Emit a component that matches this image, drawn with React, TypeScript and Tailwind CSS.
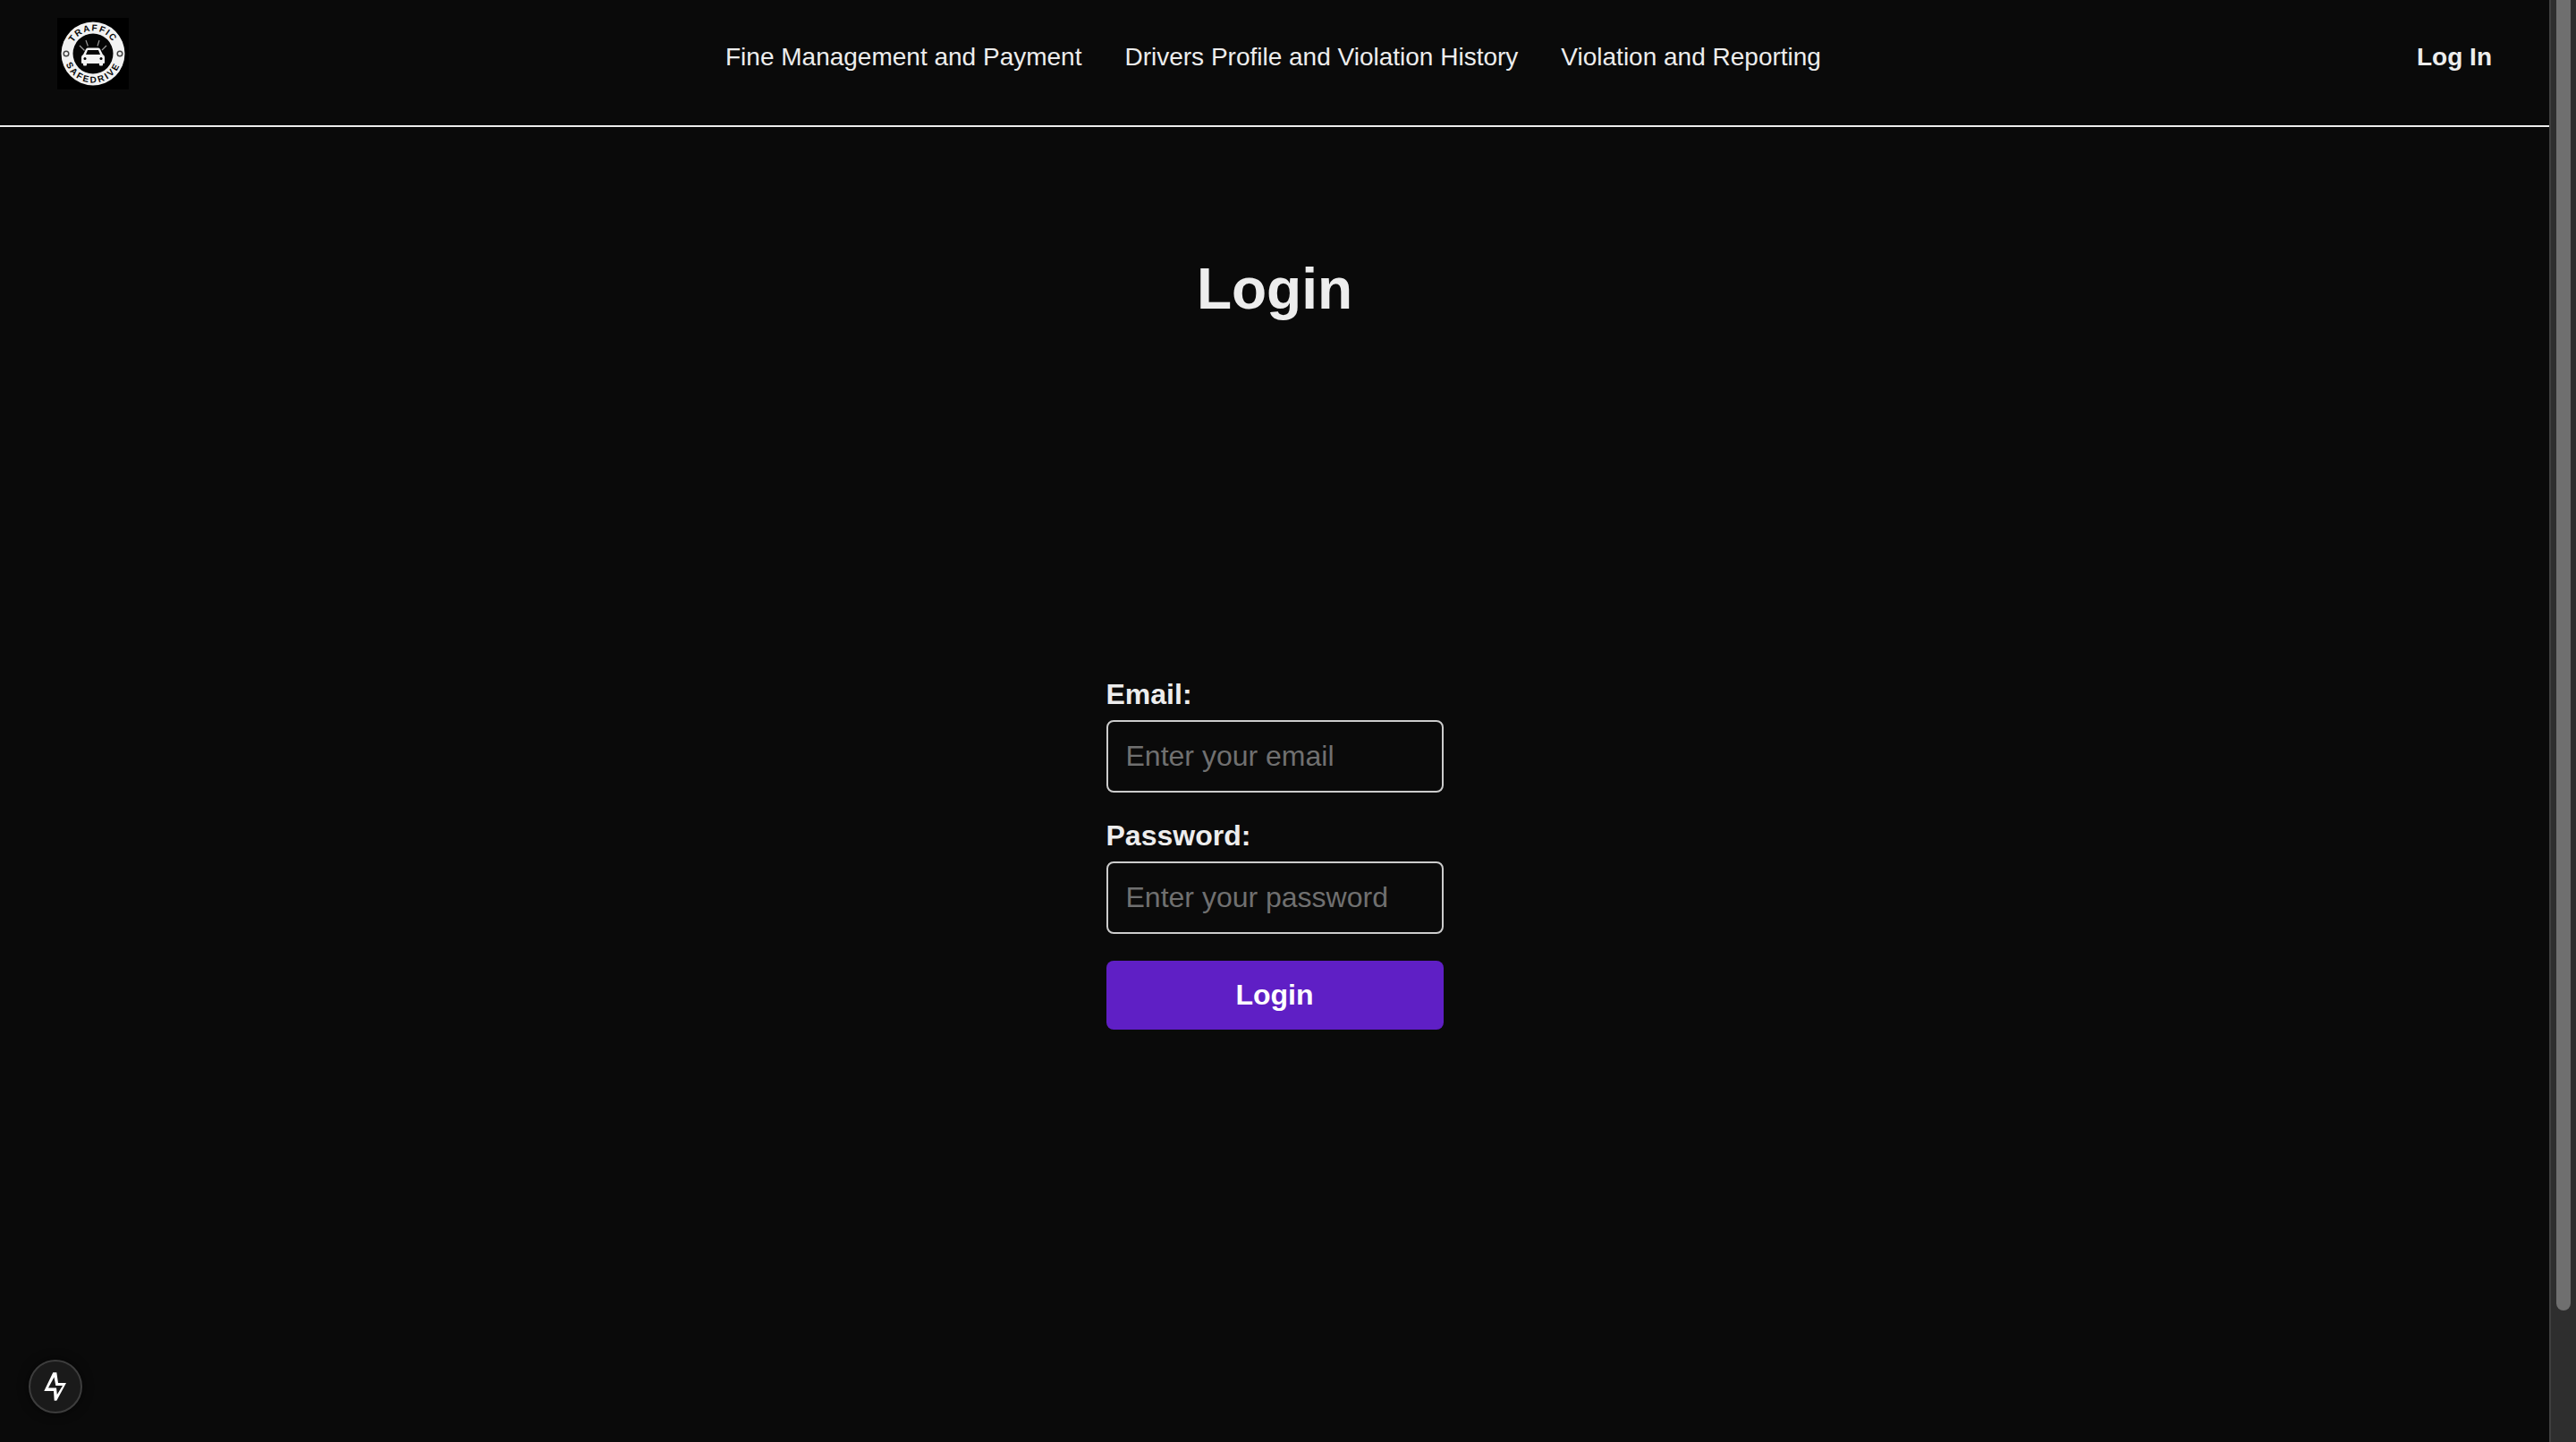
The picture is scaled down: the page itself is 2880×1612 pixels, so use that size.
function Logo() {
  return (
    <div className="w-[80px] h-[80px] bg-black shrink-0">
      <svg viewBox="0 0 80 80" className="w-full h-full">
        <defs>
          <path id="logo-top" d="M 14.500 40 A 25.500 25.500 0 0 1 65.500 40" />
          <path id="logo-bottom" d="M 7.500 40 A 32.500 32.500 0 0 0 72.500 40" />
        </defs>
        <circle cx="40" cy="40" r="35.500" fill="#f2f2f2" />
        <circle cx="40" cy="40" r="22.500" fill="#050505" />
        <circle cx="10" cy="40" r="2.800" fill="#f2f2f2" stroke="#444" strokeWidth="1.500" />
        <circle cx="70" cy="40" r="2.800" fill="#f2f2f2" stroke="#444" strokeWidth="1.500" />
        <text fontFamily="'Liberation Sans', sans-serif" fontWeight="700" fontSize="10" fill="#0a0a0a" letterSpacing="1.600">
          <textPath href="#logo-top" startOffset="50%" textAnchor="middle">TRAFFIC</textPath>
        </text>
        <text fontFamily="'Liberation Sans', sans-serif" fontWeight="700" fontSize="10" fill="#0a0a0a" letterSpacing="2.300">
          <textPath href="#logo-bottom" startOffset="50%" textAnchor="middle">SAFEDRIVE</textPath>
        </text>
        <path d="M29 41l3-6q.6-1.500 2-1.500h12q1.400 0 2 1.500l3 6q2 1 2 3v6q0 1-1 1h-1v1.500q0 1-1 1h-2q-1 0-1-1V51H33v1.500q0 1-1 1h-2q-1 0-1-1V51h-1q-1 0-1-1v-6q0-2 2-3z" fill="#f2f2f2" />
        <path d="M32 41l2-5h12l2 5z" fill="#050505" />
        <circle cx="31" cy="45.500" r="1.500" fill="#050505" />
        <circle cx="49" cy="45.500" r="1.500" fill="#050505" />
        <path d="M25 31l5.500 5.500M32 25l2.300 6.500M47 25l-2 6.500M55 31l-5 5" stroke="#999" strokeWidth="1.200" />
      </svg>
    </div>
  );
}

const navLinks = ['Fine Management and Payment', 'Drivers Profile and Violation History', 'Violation and Reporting'];

function Header() {
  return (
    <header className="h-[142px] border-b-2 border-[#ededed] flex pl-[64px] pr-[64px] pt-[20px]">
      <Logo />
      <nav className="flex gap-[48px] ml-[667px] mt-[26px] h-[36px] text-[28px] leading-[36px] text-[#ededed]">
        {navLinks.map((l) => (
          <a href="#" key={l}>
            {l}
          </a>
        ))}
      </nav>
      <a href="#" className="ml-auto mt-[26px] h-[36px] text-[28px] leading-[36px] font-bold text-[#ededed]">
        Log In
      </a>
    </header>
  );
}

function Field({ label, type, placeholder }: { label: string; type: string; placeholder: string }) {
  return (
    <div className="flex flex-col mb-[30px]">
      <label className="text-[32px] leading-[37px] font-bold text-[#ededed] mb-[10px]">{label}</label>
      <input
        type={type}
        placeholder={placeholder}
        className="w-[377px] h-[81px] px-[20px] text-[32px] bg-transparent border-2 border-[#ccc] rounded-[8px] text-[#ededed] placeholder:text-[#707070] outline-none"
      />
    </div>
  );
}

export default function App() {
  return (
    <div className="h-screen overflow-hidden flex bg-[#0a0a0a] font-['Liberation_Sans',Arial,sans-serif]">
      <div className="relative flex-1 min-w-0">
        <Header />
        <main className="flex flex-col items-center">
          <h1 className="mt-[144px] text-[64px] leading-[74px] font-bold text-[#ededed]">Login</h1>
          <form className="mt-[398px] flex flex-col">
            <Field label="Email:" type="email" placeholder="Enter your email" />
            <Field label="Password:" type="password" placeholder="Enter your password" />
            <button className="h-[77px] pb-[2px] rounded-[8px] bg-[#5f1fc5] text-white text-[32px] font-bold">Login</button>
          </form>
        </main>
        {/* next dev indicator */}
        <div className="absolute left-[32px] bottom-[32px] w-[60px] h-[60px] rounded-full bg-[#1a1a1a] border-2 border-[#3d3d3d] shadow-[0_0_12px_rgba(0,0,0,0.6)] flex items-center justify-center">
          <svg viewBox="0 0 28 32" className="w-[28px] h-[32px]" fill="#fff" fillRule="evenodd">
            <path d="M11.300 0.300L1.300 21H12L12.700 31.700H15.300L26 12H17L15.300 0.300ZM12.500 5.500L6 17.500H15L15.800 25L22 15H14.300Z" />
          </svg>
        </div>
      </div>
      {/* scrollbar */}
      <div className="w-[30px] shrink-0 bg-[#2e2e2e] border-l-2 border-[#3f3f3f] pl-[6px] pr-[4px]">
        <div className="w-[16px] h-[1465px] bg-[#6f6f6f] rounded-b-full" />
      </div>
    </div>
  );
}
